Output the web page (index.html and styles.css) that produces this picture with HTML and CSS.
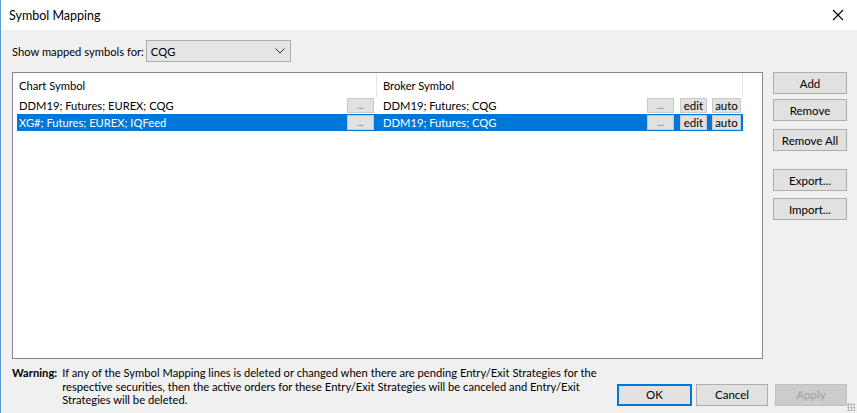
FILE: index.html
```html
<!DOCTYPE html>
<html lang="en">
<head>
  <meta charset="UTF-8">
  <title>Symbol Mapping</title>
  <link rel="stylesheet" href="styles.css">
</head>
<body>
  <div class="window">
    <div class="titlebar">
      <span class="title">Symbol Mapping</span>
      <span class="close">
        <svg width="12" height="12" viewBox="0 0 12 12"><path d="M1 1L11 11M11 1L1 11" stroke="#000" stroke-width="1.1" fill="none"/></svg>
      </span>
    </div>

    <div class="content">
      <div class="filter">
        <label for="source">Show mapped symbols for:</label>
        <div class="select" id="source">
          <span>CQG</span>
          <svg width="10" height="6" viewBox="0 0 10 6"><path d="M0.5 0.5L5 5L9.5 0.5" stroke="#333" fill="none"/></svg>
        </div>
      </div>

      <div class="middle">
        <div class="list">
          <div class="head">
            <div class="col-chart">Chart Symbol</div>
            <div class="col-broker">Broker Symbol</div>
          </div>
          <div class="row">
            <div class="col-chart"><span class="text">DDM19; Futures; EUREX; CQG</span><span class="cell-btn dots">...</span></div>
            <div class="col-broker"><span class="text">DDM19; Futures; CQG</span><span class="cell-btn dots">...</span><span class="cell-btn edit">edit</span><span class="cell-btn auto">auto</span></div>
          </div>
          <div class="row selected">
            <div class="col-chart"><span class="text">XG#; Futures; EUREX; IQFeed</span><span class="cell-btn dots">...</span></div>
            <div class="col-broker"><span class="text">DDM19; Futures; CQG</span><span class="cell-btn dots">...</span><span class="cell-btn edit">edit</span><span class="cell-btn auto">auto</span></div>
          </div>
        </div>

        <div class="side">
          <button class="btn">Add</button>
          <button class="btn">Remove</button>
          <button class="btn remove-all">Remove All</button>
          <button class="btn export">Export...</button>
          <button class="btn import">Import...</button>
        </div>
      </div>

      <div class="bottom">
        <div class="warning">
          <b>Warning:</b>
          <p>If any of the Symbol Mapping lines is deleted or changed when there are pending Entry/Exit Strategies for the<br>respective securities, then the active orders for these Entry/Exit Strategies will be canceled and Entry/Exit<br>Strategies will be deleted.</p>
        </div>
        <div class="actions">
          <button class="btn default">OK</button>
          <button class="btn">Cancel</button>
          <button class="btn" disabled>Apply</button>
        </div>
      </div>
    </div>
    <span class="grip"></span>
  </div>
</body>
</html>
```

FILE: styles.css
```css
* {
  margin: 0;
  padding: 0;
  box-sizing: border-box;
}

body {
  width: 857px;
  height: 413px;
  overflow: hidden;
  font-family: Lato, "Open Sans", sans-serif;
  font-size: 11.2px;
  color: #000;
}

.window {
  position: relative;
  height: 100%;
  background: #f0f0f0;
  border-left: 1px solid #5b9bd5;
  display: flex;
  flex-direction: column;
}

/* title bar */
.titlebar {
  flex-shrink: 0;
  height: 30px;
  background: #fff;
  display: flex;
  align-items: center;
  justify-content: space-between;
  padding: 0 13px 0 8px;
}

.title {
  font-size: 12.5px;
}

.close {
  display: flex;
}

.content {
  flex: 1;
  min-height: 0;
  padding: 10px 10px 7px 11px;
  display: flex;
  flex-direction: column;
}

/* source selector */
.filter {
  flex-shrink: 0;
  display: flex;
  align-items: center;
  gap: 2px;
  height: 22px;
}

.select {
  width: 145px;
  height: 22px;
  border: 1px solid #adadad;
  background: #e5e5e5;
  display: flex;
  align-items: center;
  justify-content: space-between;
  padding: 0 5px 0 4px;
}

/* list + side buttons */
.middle {
  flex-shrink: 0;
  display: flex;
  gap: 10px;
  margin-top: 10px;
  height: 287px;
}

.list {
  width: 751px;
  height: 100%;
  background: #fff;
  border: 1px solid #828790;
  padding-left: 4px;
}

.head,
.row {
  display: flex;
  width: 726px;
}

.head {
  height: 24px;
  align-items: center;
}

.head .col-chart,
.head .col-broker {
  height: 100%;
  display: flex;
  align-items: center;
  border-right: 1px solid #e5e5e5;
}

.col-chart {
  width: 360px;
  padding-left: 2px;
  display: flex;
  align-items: center;
}

.col-broker {
  width: 366px;
  padding-left: 6px;
  display: flex;
  align-items: center;
}

.row {
  height: 17px;
}

.row .col-chart,
.row .col-broker {
  height: 100%;
}

.text {
  flex: 1;
  white-space: nowrap;
}

.row.selected {
  background: #0078d7;
  color: #fff;
}

.cell-btn {
  height: 15px;
  background: #e1e1e1;
  border: 1px solid #c9c9c9;
  color: #000;
  display: flex;
  align-items: center;
  justify-content: center;
  font-size: 11.5px;
  line-height: 1;
}

.cell-btn.dots {
  width: 27px;
  color: #666;
  align-items: flex-end;
  padding-bottom: 2px;
  font-size: 9px;
}

.col-chart .cell-btn.dots {
  margin-right: 3px;
}

.col-broker .cell-btn.dots {
  margin-right: 6px;
}

.cell-btn.edit {
  width: 27px;
  margin-right: 5px;
}

.cell-btn.auto {
  width: 29px;
  margin-right: 2px;
}

.side {
  display: flex;
  flex-direction: column;
  gap: 5px;
}

.btn {
  font-family: inherit;
  font-size: 11.5px;
  width: 74px;
  height: 22px;
  background: #e1e1e1;
  border: 1px solid #adadad;
  color: #000;
}

.btn.remove-all {
  margin-top: 3px;
}

.btn.export {
  margin-top: 13px;
}

.btn.import {
  margin-top: 2px;
}

.btn.default {
  border: 2px solid #0078d7;
}

.btn:disabled {
  color: #a0a0a0;
  background: #ccc;
  border-color: #bfbfbf;
}

/* footer */
.bottom {
  flex: 1;
  display: flex;
  justify-content: space-between;
  padding-top: 7px;
}

.warning {
  display: flex;
  gap: 5px;
  line-height: 13.5px;
}

.warning p {
  white-space: nowrap;
}

.actions {
  flex-shrink: 0;
  display: flex;
  align-items: flex-end;
  gap: 4px;
  padding-bottom: 1px;
}

.actions .btn {
  width: 75px;
}

.actions .btn:nth-child(2) {
  width: 72px;
}

.actions .btn:last-child {
  margin-left: 3px;
  width: 72px;
}

.grip {
  position: absolute;
  right: 2px;
  bottom: 2px;
  width: 8px;
  height: 8px;
  background: radial-gradient(circle, #bcbcbc 1px, transparent 1.2px) 0 0 / 3px 3px;
}
```
